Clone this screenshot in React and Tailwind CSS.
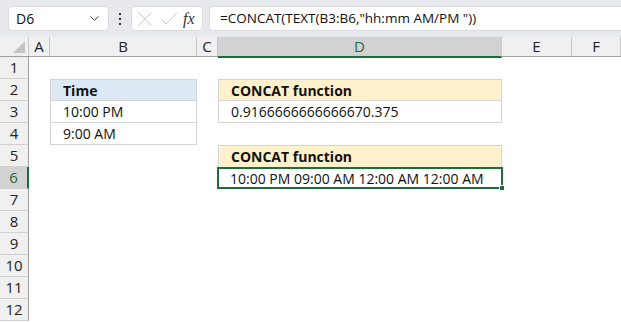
import { ChevronDown, X, Check } from 'lucide-react';

const cols = [
  { key: 'A', w: 'w-[21px]' },
  { key: 'B', w: 'w-[147px]' },
  { key: 'C', w: 'w-[21px]' },
  { key: 'D', w: 'w-[284px]' },
  { key: 'E', w: 'w-[70px]' },
  { key: 'F', w: 'flex-1' },
];

function RowHead({ n, active }) {
  return (
    <div
      className={`w-[29px] h-[22px] shrink-0 flex items-center justify-center text-[15px] border-b border-[#d0d0d0] border-r ${
        active ? 'bg-[#d2d2d2] text-[#1e6b3c] border-r-2 border-r-[#1e6b3c]' : 'bg-[#f0f0f0] text-[#222] border-r-[#9f9f9f]'
      }`}
    >
      {n}
    </div>
  );
}

function Row({ n, active, children }) {
  return (
    <div className="flex h-[22px]">
      <RowHead n={n} active={active} />
      {children}
    </div>
  );
}

export default function App() {
  return (
    <div className="w-[621px] h-[322px] overflow-hidden bg-white text-[#111]" style={{ fontFamily: '"Open Sans", sans-serif' }}>
      {/* formula bar */}
      <div className="h-[37px] bg-[#e7e9ec] flex items-center pl-[8px]">
        <div className="w-[101px] h-[25px] shrink-0 bg-white rounded-[4px] border border-[#dadcdf] flex items-center justify-between pl-[7px] pr-[6px] text-[14px]">
          <span>D6</span>
          <ChevronDown className="w-[15px] h-[15px] shrink-0 text-[#444]" strokeWidth={1.6} />
        </div>
        <div className="w-[22px] shrink-0 flex flex-col items-center gap-[3px]">
          <span className="w-[2px] h-[2px] bg-[#333]" />
          <span className="w-[2px] h-[2px] bg-[#333]" />
          <span className="w-[2px] h-[2px] bg-[#333]" />
        </div>
        <div className="w-[72px] h-[25px] shrink-0 bg-white rounded-[4px] border border-[#dadcdf] flex items-center pl-[1px]">
          <X className="w-[24px] h-[24px] shrink-0 text-[#c4c4c4]" strokeWidth={0.9} />
          <Check className="w-[24px] h-[24px] shrink-0 text-[#c4c4c4]" strokeWidth={0.9} />
          <span className="ml-[2px] italic text-[16px] text-[#333]" style={{ fontFamily: '"Liberation Serif", serif' }}>fx</span>
        </div>
        <div className="ml-[6px] flex-1 h-[25px] bg-white rounded-l-[4px] border border-r-0 border-[#dadcdf] flex items-center pl-[10px] text-[13.5px] text-[#111] whitespace-nowrap">
          =CONCAT(TEXT(B3:B6,"hh:mm AM/PM "))
        </div>
      </div>

      {/* column headers */}
      <div className="flex h-[20px] bg-[#f0f0f0] border-b border-[#9f9f9f]">
        <div className="w-[29px] shrink-0 border-r border-[#c8c8c8] relative">
          <div className="absolute right-[3px] bottom-[3px] w-0 h-0 border-l-[12px] border-l-transparent border-b-[12px] border-b-[#c4c4c4]" />
        </div>
        {cols.map((c) => (
          <div
            key={c.key}
            className={`${c.w} shrink-0 flex items-center justify-center text-[15px] border-r border-[#c8c8c8] ${
              c.key === 'D' ? 'bg-[#d2d2d2] text-[#1e6b3c] border-b-2 border-b-[#1e6b3c] h-[21px]' : 'text-[#222]'
            }`}
          >
            {c.key}
          </div>
        ))}
      </div>

      {/* grid */}
      <div className="text-[14px]">
        <Row n={1} />
        <Row n={2}>
          <div className="w-[21px]" />
          <div className="w-[147px] bg-[#dde9f5] border border-[#d4d4d4] pl-[12px] font-bold flex items-center">Time</div>
          <div className="w-[21px]" />
          <div className="w-[284px] bg-[#fff1cc] border border-[#d4d4d4] pl-[12px] font-bold flex items-center">CONCAT function</div>
        </Row>
        <Row n={3}>
          <div className="w-[21px]" />
          <div className="w-[147px] border-x border-b border-[#d4d4d4] pl-[12px] flex items-center">10:00 PM</div>
          <div className="w-[21px]" />
          <div className="w-[284px] border-x border-b border-[#d4d4d4] pl-[12px] flex items-center">0.9166666666666670.375</div>
        </Row>
        <Row n={4}>
          <div className="w-[21px]" />
          <div className="w-[147px] border-x border-b border-[#d4d4d4] pl-[12px] flex items-center">9:00 AM</div>
        </Row>
        <Row n={5}>
          <div className="w-[189px]" />
          <div className="w-[284px] bg-[#fff1cc] border-x border-t border-[#d4d4d4] pl-[12px] font-bold flex items-center">CONCAT function</div>
        </Row>
        <Row n={6} active>
          <div className="w-[188px]" />
          <div className="relative w-[286px] border-2 border-[#1e6b3c] pl-[11px] flex items-center">
            10:00 PM 09:00 AM 12:00 AM 12:00 AM
            <span className="absolute -right-[4px] -bottom-[4px] w-[6px] h-[6px] bg-[#1e6b3c] border border-white" />
          </div>
        </Row>
        {[7, 8, 9, 10, 11, 12].map((n) => (
          <Row key={n} n={n} />
        ))}
      </div>
    </div>
  );
}
